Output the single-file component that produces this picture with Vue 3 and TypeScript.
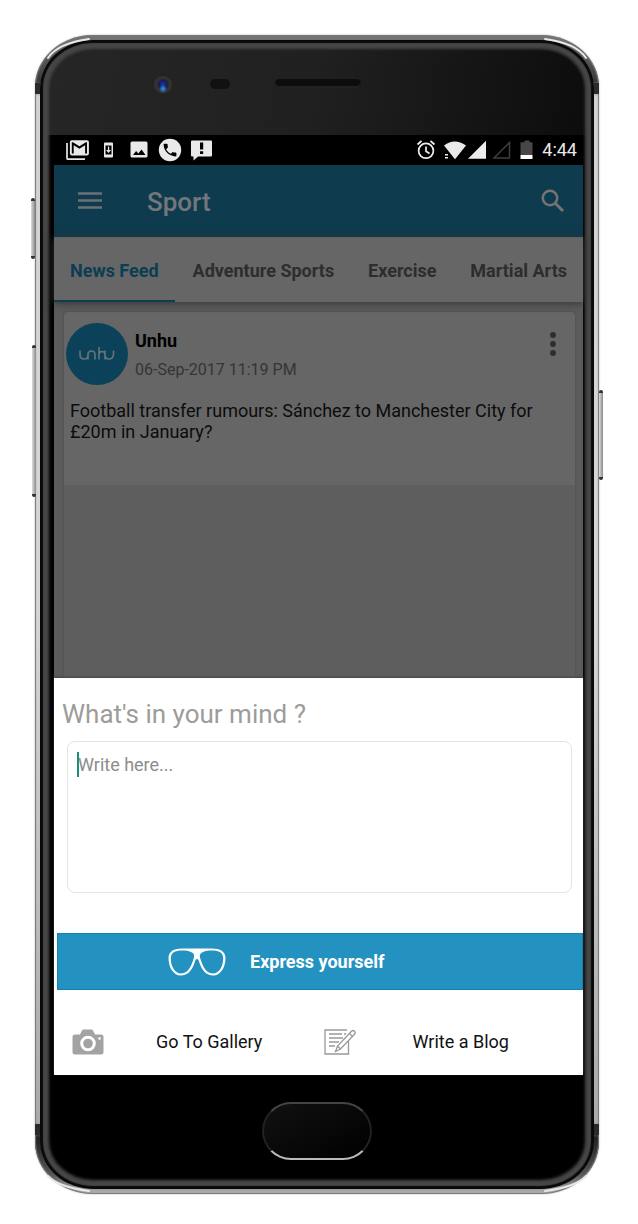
<script setup lang="ts">
import { ref } from 'vue'

const tabs: string[] = ['News Feed', 'Adventure Sports', 'Exercise', 'Martial Arts']
const activeTab = ref<string>('News Feed')
const draft = ref<string>('')
</script>

<template>
  <main class="stage">
    <div class="phone">
      <i class="side volume-top"></i>
      <i class="side volume"></i>
      <i class="side power"></i>
      <i class="antenna upper"></i>
      <i class="antenna lower"></i>
      <div class="bezel">
        <div class="forehead">
          <i class="camera"></i>
          <i class="sensor"></i>
          <i class="speaker"></i>
        </div>
        <div class="screen">
          <div class="status">
            <svg class="notes" width="148" height="24" viewBox="0 0 148 24">
              <path d="M1 5v15.200q0 1 1 1h17" fill="none" stroke="#e9e9e9" stroke-width="1.700" />
              <path fill="#e9e9e9" fill-rule="evenodd" transform="translate(2 -1.500) scale(.95)" d="M20 4H4c-1.100 0-2 .9-2 2v12c0 1.100.9 2 2 2h16c1.100 0 2-.9 2-2V6c0-1.100-.9-2-2-2zm0 14h-2V9.250L12 13 6 9.250V18H4V6h1.200l6.800 4.250L18.800 6H20v12z" />
              <path fill="#e9e9e9" fill-rule="evenodd" d="M39 4.500h7q1 0 1 1v13q0 1-1 1h-7q-1 0-1-1v-13q0-1 1-1zM39.500 7.500v9h6v-9z" />
              <path fill="#e9e9e9" d="M41.900 8.500h1.300v3.500H45l-2.500 3-2.500-3h1.900z" />
              <path fill="#e9e9e9" fill-rule="evenodd" d="M66 3.500h14q1.500 0 1.500 1.500v13q0 1.500-1.500 1.500H66q-1.500 0-1.500-1.500V5q0-1.500 1.500-1.500zM67 17h12.500l-4-5.500-3.200 4-2.200-2.500z" />
              <circle cx="104" cy="12" r="11.200" fill="#e9e9e9" />
              <path fill="#000" transform="translate(95.500 3.500) scale(.71)" d="M6.600 10.800c1.400 2.800 3.800 5.100 6.600 6.600l2.200-2.200c.3-.3.700-.4 1-.2 1.100.4 2.300.6 3.600.6.600 0 1 .4 1 1V20c0 .6-.4 1-1 1C10.600 21 3 13.400 3 4c0-.6.500-1 1-1h3.500c.6 0 1 .4 1 1 0 1.300.2 2.400.6 3.600.1.300 0 .7-.2 1z" />
              <path fill="#e9e9e9" d="M126 2.500h19q1 0 1 1v14q0 1-1 1h-13l-4.500 4v-4H126q-1 0-1-1v-14q0-1 1-1z" />
              <path fill="#000" d="M134 4.500h3.200v7H134zM134 13.200h3.200v2.800H134z" />
            </svg>
            <svg class="signals" width="118" height="24" viewBox="0 0 118 24">
              <g fill="none" stroke="#ededed" stroke-width="1.700">
                <circle cx="10" cy="12.800" r="7.400" />
                <path d="M10 8.500v4.800l3.500 2.200M1.500 6.500l4-3.500M18.500 6.500l-4-3.500" />
              </g>
              <path fill="#e9e9e9" d="M28 7.500Q38.500-.500 50 7.500L39 21.200z" />
              <path fill="#e9e9e9" d="M29 16h3v1.500h-3zM29 19h3v1.500h-3z" />
              <path fill="#ededed" d="M52 20.800L70 2.800v18z" />
              <path fill="none" stroke="#3f3f3f" stroke-width="1.500" d="M78 20L93.500 4.500V20z" />
              <path fill="#474747" d="M108.500 2.500h5v1.800h3v13h-12v-13h4z" />
              <path fill="#fff" d="M104.500 17h12v4h-12z" />
            </svg>
            <span class="clock">4:44</span>
          </div>

          <header class="appbar">
            <button class="icon-btn" type="button" aria-label="Menu">
              <svg width="26" height="20" viewBox="0 0 26 20"><path d="M1 2.500h24M1 9.500h24M1 16.500h24" stroke="#6c7175" stroke-width="2.500" /></svg>
            </button>
            <h1>Sport</h1>
            <button class="icon-btn" type="button" aria-label="Search">
              <svg width="24" height="24" viewBox="0 0 24 24" fill="none" stroke="#767373" stroke-width="2.500"><circle cx="9" cy="9" r="7.200" /><path d="M14.500 14.500l7.500 7.500" stroke-width="3" /></svg>
            </button>
          </header>

          <nav class="tabs" aria-label="Categories">
            <button v-for="tab in tabs" :key="tab" type="button" :class="{ active: tab === activeTab }" @click="activeTab = tab">{{ tab }}</button>
          </nav>

          <section class="feed">
            <article class="card">
              <div class="post-head">
                <svg class="avatar" width="62" height="62" viewBox="0 0 62 62" role="img" aria-label="Unhu logo">
                  <circle cx="31" cy="31" r="31" fill="#0b4159" />
                  <path d="M14 28v3.500q0 4.500 4 4.500t4-4v-2M22 36v-4q0-4 3.500-4t3.500 4v4M33 24.500V36M33 32q0-3.500 3-3.500t3 3.500v4M39 28v3.500q0 4.500 4 4.500t4.500-4.500V28" fill="none" stroke="#67747a" stroke-width="1.600" stroke-linecap="round" />
                </svg>
                <div class="who">
                  <h2>Unhu</h2>
                  <time datetime="2017-09-06T23:19">06-Sep-2017 11:19 PM</time>
                </div>
                <button class="icon-btn more" type="button" aria-label="More options">
                  <svg width="6" height="24" viewBox="0 0 6 24" fill="#2d2d2d"><circle cx="3" cy="3" r="2.900" /><circle cx="3" cy="12" r="2.900" /><circle cx="3" cy="21" r="2.900" /></svg>
                </button>
              </div>
              <p>Football transfer rumours: Sánchez to Manchester City for £20m in January?</p>
              <div class="media"></div>
            </article>
          </section>

          <form class="sheet" @submit.prevent>
            <label for="post">What's in your mind ?</label>
            <div class="field">
              <textarea id="post" v-model="draft" placeholder="Write here..."></textarea>
              <i class="caret"></i>
            </div>
            <button class="express" type="submit">
              <svg width="58" height="28" viewBox="0 0 58 28">
                <path fill="#fff" fill-rule="evenodd" d="M.500 10C.500 3.500 6 .500 14 .500h30C52 .500 57.500 3.500 57.500 10C57.500 20 52 27.500 45.500 27.500C38 27.500 34 22 31.500 15C30.500 12 30.300 11 29 11C27.700 11 27.500 12 26.500 15C24 22 20 27.500 12.500 27.500C6 27.500.500 20 .500 10zM2.800 10.500C2.800 19 7.500 25.500 12.800 25.500C18.500 25.500 22 21 24.500 14C26.500 8.500 27 6.500 24 4.500C21.500 2.800 17 2.500 14 2.500C7 2.500 2.800 4.500 2.800 10.500zM55.200 10.500C55.200 4.500 51 2.500 44 2.500C41 2.500 36.500 2.800 34 4.500C31 6.500 31.500 8.500 33.500 14C36 21 39.500 25.500 45.200 25.500C50.500 25.500 55.200 19 55.200 10.500z" />
              </svg>
              Express yourself
            </button>
            <div class="actions">
              <button type="button">
                <svg width="32" height="26" viewBox="0 0 32 26">
                  <path fill="#a4a3a2" d="M3 5.500h5l2-4q.500-1 1.500-1h8q1 0 1.500 1l2 4h6q2.500 0 2.500 2.500v15q0 2.500-2.500 2.500H3q-2.500 0-2.500-2.500V8q0-2.500 2.500-2.500z" />
                  <circle cx="16" cy="14.500" r="6.300" fill="#a4a3a2" stroke="#fff" stroke-width="3" />
                  <circle cx="27.500" cy="9.500" r="1.300" fill="#fff" />
                </svg>
                <span>Go To Gallery</span>
              </button>
              <button type="button">
                <svg width="32" height="26" viewBox="0 0 32 26" fill="none" stroke="#999" stroke-width="1.300">
                  <path d="M23 1H1v24h23.500V12M5 5h13M5 9h14M5 13h10M5 17h6M20 5h2" />
                  <path fill="#fff" d="M11.500 22.500l2-5.500L27.500 2.200q1.500-1.500 3 0t0 3L16.500 20zM13.500 17l3 3M25.500 4.500l3 3" />
                </svg>
                <span>Write a Blog</span>
              </button>
            </div>
          </form>
        </div>
        <div class="chin"><i class="home"></i></div>
      </div>
      <svg class="glint tl" width="58" height="50" viewBox="0 0 58 50"><path d="M13 23Q23 8 54 4" /></svg>
      <svg class="glint tr" width="58" height="50" viewBox="0 0 58 50"><path d="M13 23Q23 8 54 4" /></svg>
      <svg class="glint bl" width="58" height="50" viewBox="0 0 58 50"><path d="M13 18Q23 7 54 3" /></svg>
      <svg class="glint br" width="58" height="50" viewBox="0 0 58 50"><path d="M13 18Q23 7 54 3" /></svg>
    </div>
  </main>
</template>

<style>
body {
  margin: 0;
  background: #fff;
}
</style>

<style scoped>
* {
  box-sizing: border-box;
}
.stage {
  padding: 35px 39px 30px 35px;
  font-family: Roboto, "Liberation Sans", sans-serif;
  background: #fff;
}
button {
  font: inherit;
  border: 0;
  padding: 0;
  background: none;
  cursor: pointer;
}
svg {
  display: block;
  flex: none;
}
.phone {
  position: relative;
  padding: 5px;
  border-radius: 58px / 52px;
  background: linear-gradient(#777, #3a3a3a 46px, #d2d2d2 62px, #d6d6d6 50%, #aaa calc(100% - 72px), #222 calc(100% - 56px), #555 calc(100% - 20px), #b5b5b5);
  box-shadow: inset 0 0 1px 1px #777, 0 0 2px #aaa;
}
.bezel {
  padding: 0 11px 0 14px;
  border-radius: 53px / 48px;
  background: linear-gradient(100deg, #262626, #202020 50%, #0c0c0c) top / 100% 95px no-repeat, #000;
  box-shadow: inset 0 0 1px 3px #090909, inset 0 0 3px 9px #464646;
}
.side {
  position: absolute;
  width: 4px;
  border: solid #333;
  border-width: 3px 0;
  border-radius: 2px;
  background: linear-gradient(90deg, #ddd, #8a8a8a);
}
.volume-top {
  left: -4px;
  top: 163px;
  height: 61px;
}
.volume {
  left: -3px;
  top: 310px;
  height: 152px;
}
.power {
  right: -4px;
  top: 355px;
  height: 90px;
}
.antenna {
  position: absolute;
  left: 0;
  right: 0;
  height: 11px;
  border: solid #2b2b2b;
  border-width: 0 5px;
}
.upper {
  top: 48px;
}
.lower {
  bottom: 59px;
}
.glint {
  position: absolute;
  fill: none;
  stroke: #e8e8e8;
  stroke-width: 2;
  stroke-linecap: round;
}
.tl {
  left: 0;
  top: 0;
}
.tr {
  right: 0;
  top: 0;
  transform: scaleX(-1);
}
.bl {
  left: 0;
  bottom: 0;
  transform: scaleY(-1);
}
.br {
  right: 0;
  bottom: 0;
  transform: scale(-1);
}
.forehead {
  height: 95px;
  padding: 36px 0 0 99px;
  display: flex;
  align-items: flex-start;
}
.camera {
  width: 20px;
  height: 20px;
  border-radius: 50%;
  background: radial-gradient(circle at 50% 64%, #2a86d8 0 1px, transparent 4px), radial-gradient(circle at 50% 42%, #1d2d9e 0 1px, #171c50 4px, #303030 6px, #333 8px, #222 10px);
}
.sensor {
  width: 20px;
  height: 10px;
  margin: 3px 0 0 37px;
  border-radius: 5px;
  background: #111;
}
.speaker {
  width: 86px;
  height: 9px;
  margin: 3px 0 0 45px;
  border-radius: 5px;
  background: #0c0c0c;
  box-shadow: inset 0 -2px 1px #222;
}
.screen {
  background: #5b5b5b;
}
.status {
  height: 30px;
  padding: 0 6px 0 12px;
  display: flex;
  align-items: center;
  background: #000;
  color: #e9e9e9;
}
.signals {
  margin-left: auto;
}
.clock {
  margin-left: 8px;
  font-size: 18px;
  line-height: 30px;
}
.appbar {
  height: 72px;
  padding: 0 18px 0 23px;
  display: flex;
  align-items: center;
  background: #0f3b4e;
}
h1 {
  flex: 1;
  margin: 2px 0 0 44px;
  font-size: 26px;
  line-height: 32px;
  font-weight: 500;
  color: #74777a;
}
.tabs {
  position: relative;
  display: flex;
  justify-content: space-between;
  height: 65px;
  background: #666;
  border-top: 1px solid #5a6266;
  box-shadow: 0 1px 8px #333;
}
.tabs button {
  padding: 2px 16px 0;
  font-size: 18px;
  font-weight: 700;
  white-space: nowrap;
  color: #2d2d2d;
  border-bottom: 2px solid transparent;
}
.tabs button.active {
  color: #0b3d53;
  border-bottom-color: #0b3d53;
}
.feed {
  padding: 10px 8px 0 10px;
}
.card {
  border-radius: 4px 4px 0 0;
  background: #666;
  box-shadow: 0 0 2px #444;
}
.post-head {
  display: flex;
  align-items: flex-start;
  padding: 11px 19px 0 2px;
}
.who {
  flex: 1;
  padding-left: 7px;
}
h2 {
  margin: 7px 0 0;
  font-size: 18px;
  line-height: 22px;
  font-weight: 700;
  color: #000;
}
time {
  display: block;
  margin-top: 7px;
  font-size: 16px;
  line-height: 22px;
  color: #353535;
}
.more {
  margin-top: 9px;
}
.card p {
  margin: 0;
  padding: 15px 16px 43px 6px;
  font-size: 18px;
  line-height: 21px;
  color: #0c0c0c;
}
.media {
  height: 193px;
  background: #5e5e5e;
}
.sheet {
  position: relative;
  background: #fff;
  box-shadow: 0 -1px 2px #444;
}
.sheet label {
  display: block;
  padding: 20px 8px 11px;
  font-size: 26px;
  line-height: 32px;
  color: #9d9c9a;
}
.field {
  position: relative;
  margin: 0 11px 0 13px;
}
textarea {
  display: block;
  width: 100%;
  height: 152px;
  padding: 11px 10px;
  border: 1px solid #e4e4e4;
  border-radius: 8px;
  outline: 0;
  resize: none;
  background: #fff;
  font: 18px/24px Roboto, "Liberation Sans", sans-serif;
  color: #222;
}
textarea::placeholder {
  color: #8d8d8d;
  opacity: 1;
}
.caret {
  position: absolute;
  left: 10px;
  top: 11px;
  width: 2px;
  height: 25px;
  background: #15927d;
}
.express {
  display: flex;
  align-items: center;
  width: calc(100% - 3px);
  height: 57px;
  margin: 40px 0 0 3px;
  padding-left: 110px;
  gap: 24px;
  border: 1px solid #1482ae;
  background: #2492c0;
  color: #fff;
  font-size: 18px;
  font-weight: 700;
}
.actions {
  display: flex;
  height: 85px;
  padding: 18px 8px 0 18px;
}
.actions button {
  flex: 1;
  display: flex;
  align-items: center;
  font-size: 18px;
  color: #111;
}
.actions span {
  padding-left: 52px;
}
.actions button + button span {
  padding-left: 57px;
}
.chin {
  height: 114px;
  padding: 27px 3px 0 0;
}
.home {
  display: block;
  width: 110px;
  height: 58px;
  margin: 0 auto;
  border-radius: 29px;
  border: 2px solid;
  border-color: #444 #222 #bbb;
  background: linear-gradient(150deg, #111, #000);
}
</style>
